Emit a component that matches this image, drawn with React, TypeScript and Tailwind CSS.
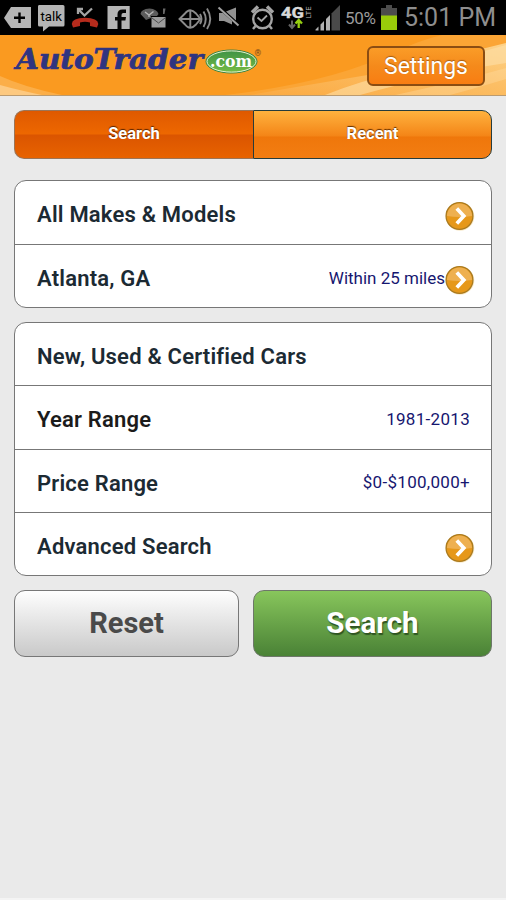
import type { ReactNode } from "react";
import clsx from "clsx";

type Row = {
  label: string;
  value?: string;
  arrow?: boolean;
  dark?: boolean;
};

const LOCATION_ROWS: Row[] = [
  { label: "All Makes & Models", arrow: true },
  { label: "Atlanta, GA", value: "Within 25 miles", arrow: true },
];

const FILTER_ROWS: Row[] = [
  { label: "New, Used & Certified Cars" },
  { label: "Year Range", value: "1981-2013", dark: true },
  { label: "Price Range", value: "$0-$100,000+" },
  { label: "Advanced Search", arrow: true },
];

export default function App() {
  return (
    <div className="flex h-[900px] w-[506px] flex-col overflow-hidden border-b-2 border-[#f4f4f4] bg-[#eaeaea] font-['Roboto',sans-serif]">
      <StatusBar />
      <Header />
      <main className="flex flex-col px-[14px] pt-[14px]">
        <Tabs />
        <Card rows={LOCATION_ROWS} className="mt-[21px] h-[128px]" />
        <Card rows={FILTER_ROWS} className="mt-[14px] h-[254px]" />
        <div className="mt-[14px] flex h-[67px] gap-[14px]">
          <button className="w-[225px] rounded-[11px] border border-[#777] bg-linear-to-b from-[#fefefe] to-[#c9c9c9] text-[29px] font-bold text-[#4a4a4a]">
            Reset
          </button>
          <button className="flex-1 rounded-[11px] border border-[#6d7769] bg-linear-to-b from-[#88c65c] to-[#4a8236] pb-px text-[29.5px] font-bold text-white [text-shadow:1px_2px_1px_#2f5522]">
            Search
          </button>
        </div>
      </main>
    </div>
  );
}

function StatusBar() {
  return (
    <div className="flex h-[35px] shrink-0 bg-black">
      <svg width="345" height="35" viewBox="0 0 345 35" className="shrink-0">
        {/* back tag with plus */}
        <path d="M4 18 11 7H31V28H11Z" fill="#b5b5b5" />
        <path d="M19.500 12.500V23M14 17.700H25" stroke="#000" strokeWidth="2.400" />
        {/* talk */}
        <path d="M39 5H63Q64.500 5 64.500 6.500V25Q64.500 26.500 63 26.500H49L43 31.500V26.500H39.500Q38 26.500 38 25V6.500Q38 5 39 5Z" fill="#b5b5b5" />
        <text x="40.500" y="20.800" fontSize="13.500" textLength="21.500" lengthAdjust="spacingAndGlyphs" fill="#000">talk</text>
        {/* missed call */}
        <path d="M73 27.500 71.800 24Q72 18 85 17.800Q98 18 98.300 24L97 27.500 90 26V22.500Q85 21 80 22.500V26Z" fill="#b52b1c" />
        <path d="M78 14V9H83M78.500 9.500 84.500 15.500 92 8.500" stroke="#a5a5a5" strokeWidth="2.300" fill="none" />
        {/* facebook */}
        <path d="M107.500 6H129.700V29H107.500Z" fill="#b5b5b5" />
        <path d="M117.500 29V20.500H115V17H117.500V14.200Q117.500 9.500 122.500 9.500H126V13H123.300Q121.500 13 121.500 15V17H126L125.400 20.500H121.500V29Z" fill="#050505" />
        {/* mail */}
        <path d="M140.500 14Q141 9 149.500 8.500Q157 9 158.500 14L157 16H151V18L146 20Z" fill="#5c5c5c" />
        <path d="M145 12 149 15 153.500 11.500M149 14.500V17" stroke="#b5b5b5" strokeWidth="1.400" fill="none" />
        <path d="M151.500 17H165.500V27.500H151.500Z" fill="#9c9c9c" />
        <path d="M152 18 158.500 23 165 18" stroke="#4d4d4d" fill="none" />
        <path d="M163 8.500H165.500L164.500 14H163Z" fill="#666" />
        {/* location broadcast */}
        <g stroke="#8b8b8b" strokeWidth="1.900" fill="none">
          <path d="M179.500 19 185 13.500Q190 7 196 13.500L200.500 19 196 24.500Q190 31 185 24.500Z" />
          <path d="M180 19H200.500M190.300 10.500V28" />
          <path d="M200 14Q203 19 200 24M203.500 11.500Q208 19 203.500 27M207 8.500Q213.500 19 207 29" />
        </g>
        {/* muted */}
        <path d="M219 13H223L232 21V24.500L224 21H219Z" fill="#929292" />
        <path d="M226 11.500 236 7.500V20.500Z" fill="#929292" />
        <path d="M218.500 7.500 238.500 25.500" stroke="#a0a0a0" strokeWidth="2" />
        {/* alarm */}
        <g stroke="#a4a4a4" fill="none">
          <circle cx="262.500" cy="19" r="9.300" strokeWidth="2.400" />
          <path d="M252 12.500 258 6.500M273 12.500 267 6.500" strokeWidth="3.500" />
          <path d="M255.500 26 253 29M269.500 26 272 29" strokeWidth="2.500" />
          <path d="M257.500 17.500 261.500 21 267 15.500" strokeWidth="1.800" />
        </g>
        {/* network */}
        <text x="281" y="17.700" fontSize="15" fontWeight="700" textLength="23" lengthAdjust="spacingAndGlyphs" fill="#d9d9d9" stroke="#d9d9d9" strokeWidth="0.400">4G</text>
        <text transform="translate(311 18.500) rotate(-90)" fontSize="7" textLength="12" lengthAdjust="spacingAndGlyphs" fill="#bbb">LTE</text>
        <path d="M292 20.500V27M289 24.500 292 28 295 24.500" stroke="#666" strokeWidth="2" fill="none" />
        <path d="M298.700 28V21M295.500 23.500 298.700 20 302 23.500" stroke="#96cf10" strokeWidth="2.300" fill="none" />
        {/* signal */}
        <path d="M331.500 13.500 340 5V30.500H331.500Z" fill="#4a4a4a" />
        <path d="M315.500 30.500V29.500L318.500 26.500V30.500ZM320.500 30.500V24.500L324 21V30.500ZM326 30.500V19L330 15V30.500Z" fill="#b0b0b0" />
      </svg>
      <span className="mt-[8px] w-[36px] text-[17px] leading-5 tracking-[-0.3px] text-[#9b9b9b]">50%</span>
      <svg width="16" height="35" viewBox="0 0 16 35" className="shrink-0">
        <path d="M0 8H5V5H11V8H16V30H0Z" fill="#4c4c4c" />
        <path d="M0 15.500H16V30H0Z" fill="#99cc0a" />
      </svg>
      <span className="ml-[7px] mt-[3px] text-[25px] leading-[30px] whitespace-nowrap text-[#8e8e8e]">5:01 PM</span>
    </div>
  );
}

function Header() {
  return (
    <header className="relative flex h-[61px] shrink-0 justify-between overflow-hidden border-b border-[#bb9b70] bg-[#fa9a20] pl-[12px] pr-[21px]">
      <svg className="absolute inset-0" width="506" height="60" viewBox="0 0 506 60">
        <defs>
          <linearGradient id="swoosh" x1="0" x2="1" y1="1" y2="0">
            <stop offset="0" stopColor="#fbaa42" />
            <stop offset="0.600" stopColor="#fcbf66" />
            <stop offset="1" stopColor="#fdd38a" />
          </linearGradient>
        </defs>
        <path d="M0 41Q24 52 62 60H0Z" fill="#fbae48" />
        <path d="M0 50Q18 55 42 60H0Z" fill="#fdc980" />
        <path d="M225 60Q330 48 395 17T506 1V60Z" fill="#fba535" />
        <path d="M250 60Q325 47 380 38Q450 22 506 8V60Z" fill="url(#swoosh)" />
        <path d="M325 60Q365 44 400 38L470 20 506 10V28Q440 38 360 60Z" fill="#fee0a8" opacity="0.600" />
        <path d="M395 60Q460 46 506 33V44Q480 52 450 60Z" fill="#fee0a8" opacity="0.350" />
      </svg>
      <svg className="relative" width="254" height="50" viewBox="12 35 254 50">
        <defs>
          <linearGradient id="badge" x1="0" x2="0" y1="0" y2="1">
            <stop offset="0" stopColor="#3e9146" />
            <stop offset="1" stopColor="#76bd45" />
          </linearGradient>
        </defs>
        <text
          x="16"
          y="69"
          fontFamily="'DejaVu Serif', serif"
          fontSize="27.500"
          fontWeight="700"
          fontStyle="italic"
          textLength="187"
          lengthAdjust="spacingAndGlyphs"
          fill="#2f3480"
          stroke="#2f3480"
          strokeWidth="0.700"
        >
          AutoTrader
        </text>
        <ellipse cx="231.500" cy="61.500" rx="25.500" ry="11.500" fill="url(#badge)" stroke="#348044" />
        <ellipse cx="231.500" cy="61.500" rx="24.500" ry="10.600" fill="none" stroke="#e2f0ce" />
        <text x="210" y="67" fontFamily="'DejaVu Serif', serif" fontSize="17" fontWeight="700" textLength="42" lengthAdjust="spacingAndGlyphs" fill="#fff">
          .com
        </text>
        <text x="254.500" y="55.500" fontSize="8.500" fontWeight="700" fill="#7a4a1b">®</text>
      </svg>
      <button className="relative mt-[11px] h-[40px] w-[118px] rounded-[6px] border-2 border-[#8b4d12] bg-linear-to-b from-[#fa9c27] from-0% via-[#f58a1b] via-50% to-[#f87d12] pt-[2px] text-[23px] leading-8 text-white [text-shadow:0_-1px_1px_#a65a10]">
        Settings
      </button>
    </header>
  );
}

function Tabs() {
  return (
    <div className="flex h-[49px] text-[16.500px] font-bold text-white">
      <button className="w-[239px] rounded-l-[10px] border border-r-0 border-[#9b7558] bg-[linear-gradient(#df5900,#ed6700_48%,#db5500_52%,#e86300)] [text-shadow:0_-1px_1px_#552200]">
        Search
      </button>
      <button className="flex-1 rounded-r-[10px] border border-[#263c3c] bg-[linear-gradient(#ffb23e,#f48618_52%,#ef770b_56%,#f37d12)] [text-shadow:0_-1px_1px_#653000]">
        Recent
      </button>
    </div>
  );
}

function Card({ rows, className }: { rows: Row[]; className: string }) {
  return (
    <section className={clsx("flex flex-col divide-y divide-[#777] rounded-[12px] border border-[#777] bg-white", className)}>
      {rows.map((row) => (
        <div key={row.label} className="flex flex-1 items-center justify-between pl-[22px] pr-[16px]">
          <RowLabel dark={row.dark}>{row.label}</RowLabel>
          <div className="mt-[8px] flex items-center">
            {row.value && (
              <span
                className={clsx(
                  "mt-[-3px] text-[17px] text-[#16166f]",
                  row.arrow ? "tracking-normal" : "mr-[5px] tracking-[0.300px]",
                )}
              >
                {row.value}
              </span>
            )}
            {row.arrow && <ArrowBadge />}
          </div>
        </div>
      ))}
    </section>
  );
}

function RowLabel({ children, dark }: { children: ReactNode; dark?: boolean }) {
  return (
    <span className={clsx("mt-[5px] text-[22px] font-semibold tracking-[0.200px] whitespace-nowrap", dark ? "text-[#1b1b1b]" : "text-[#1c2a33]")}>
      {children}
    </span>
  );
}

function ArrowBadge() {
  return (
    <svg width="30" height="30" viewBox="0 0 30 30">
      <circle cx="15" cy="15.500" r="14.300" fill="#f7e9c8" />
      <circle cx="14.500" cy="15" r="13.400" fill="#e6981a" stroke="#a97a20" strokeWidth="1.300" />
      <path d="M2 15A12.500 12.500 0 0 1 27 15Q14.500 17 2 15Z" fill="#eeb050" />
      <path d="M11.800 7.500 18.800 15 11.800 22.500" stroke="#fff" strokeWidth="3.700" fill="none" />
    </svg>
  );
}
